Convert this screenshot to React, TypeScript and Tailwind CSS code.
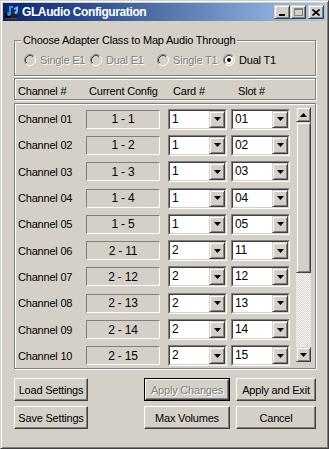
import React from 'react';

const raised =
  'border border-t-[#ffffff] border-l-[#ffffff] border-r-[#404040] border-b-[#404040] shadow-[inset_-1px_-1px_0_#808080]';
const raisedSmall =
  'border border-t-[#d4d0c8] border-l-[#d4d0c8] border-r-[#404040] border-b-[#404040] shadow-[inset_1px_1px_0_#fff,inset_-1px_-1px_0_#808080]';
const etched = 'border border-[#808080] shadow-[inset_1px_1px_0_#fff,1px_1px_0_#fff]';

const rows = [
  ['01', '1 - 1', '1'],
  ['02', '1 - 2', '1'],
  ['03', '1 - 3', '1'],
  ['04', '1 - 4', '1'],
  ['05', '1 - 5', '1'],
  ['06', '2 - 11', '2', '11'],
  ['07', '2 - 12', '2', '12'],
  ['08', '2 - 13', '2', '13'],
  ['09', '2 - 14', '2', '14'],
  ['10', '2 - 15', '2', '15'],
];

function Triangle({ up = false }: { up?: boolean }) {
  return (
    <svg width="7" height="4" viewBox="0 0 7 4">
      <path d={up ? 'M3.5 0L7 4H0Z' : 'M0 0H7L3.5 4Z'} fill="#000" />
    </svg>
  );
}

function Radio({ checked, disabled, label }: { checked?: boolean; disabled?: boolean; label: string }) {
  return (
    <div className="flex items-center gap-[4px]">
      <svg width="12" height="12" viewBox="0 0 12 12">
        <circle cx="6" cy="6" r="5" fill={disabled ? '#d4d0c8' : '#fff'} />
        <path d="M2.11 9.89A5.5 5.5 0 0 1 9.89 2.11" stroke="#808080" fill="none" />
        <path d="M9.89 2.11A5.5 5.5 0 0 1 2.11 9.89" stroke="#fff" fill="none" />
        <path d="M2.82 9.18A4.5 4.5 0 0 1 9.18 2.82" stroke="#404040" fill="none" />
        <path d="M9.18 2.82A4.5 4.5 0 0 1 2.82 9.18" stroke="#d4d0c8" fill="none" />
        {checked && <circle cx="6" cy="6" r="2" fill="#000" />}
      </svg>
      <span className={disabled ? 'text-[#808080] [text-shadow:1px_1px_0_#fff]' : 'text-black'}>{label}</span>
    </div>
  );
}

function Combo({ value }: { value: string }) {
  return (
    <div className="flex h-[21px] w-[59px] border border-t-[#808080] border-l-[#808080] border-r-white border-b-white">
      <div className="flex flex-1 border border-t-[#404040] border-l-[#404040] border-r-[#d4d0c8] border-b-[#d4d0c8] bg-white">
        <span className="flex-1 pl-[2px] text-[12px] leading-[17px]">{value}</span>
        <div className={`flex w-[16px] items-center justify-center bg-[#d4d0c8] ${raisedSmall}`}>
          <Triangle />
        </div>
      </div>
    </div>
  );
}

function Button({ label, disabled, isDefault }: { label: string; disabled?: boolean; isDefault?: boolean }) {
  const inner = (
    <div
      className={`flex h-full items-center justify-center bg-[#d4d0c8] ${raised} ${
        disabled ? 'text-[#808080] [text-shadow:1px_1px_0_#fff]' : 'text-black'
      }`}
    >
      {label}
    </div>
  );
  if (isDefault) return <div className="h-[23px] border border-black">{inner}</div>;
  return <div className="h-[23px]">{inner}</div>;
}

function TitleIcon() {
  return (
    <svg width="16" height="16" viewBox="0 0 16 16">
      <rect x="1" y="9" width="6" height="5" fill="#000" />
      <rect x="8" y="10" width="6" height="4" fill="#202020" />
      <path d="M5 2h4v2H7v6H5z" fill="#3a8fd8" />
      <circle cx="5" cy="10" r="2" fill="#3a8fd8" />
      <path d="M10 4l4-2v6h-2V5l-2 1z" fill="#6fb6ef" />
      <circle cx="12" cy="8.5" r="1.5" fill="#6fb6ef" />
      <rect x="2" y="14" width="11" height="1" fill="#505050" />
    </svg>
  );
}

function CaptionButton({ children, className = '' }: { children: React.ReactNode; className?: string }) {
  return (
    <div className={`flex h-[14px] w-[16px] items-center justify-center bg-[#d4d0c8] ${raisedSmall} ${className}`}>
      {children}
    </div>
  );
}

export default function App() {
  return (
    <div className="h-[449px] w-[329px] overflow-hidden border border-t-[#d4d0c8] border-l-[#d4d0c8] border-r-[#404040] border-b-[#404040] bg-[#d4d0c8] p-[2px] font-['Liberation_Sans',Arial,sans-serif] text-[11px] leading-[14px] tracking-[-0.2px] text-black shadow-[inset_1px_1px_0_#fff,inset_-1px_-1px_0_#808080]">
      {/* title bar */}
      <div className="flex h-[18px] items-center bg-gradient-to-r from-[#0a246a] to-[#a6caf0] pl-[1px] pr-[2px]">
        <TitleIcon />
        <span className="ml-[2px] flex-1 text-[12px] font-bold tracking-[-0.4px] text-white">GLAudio Configuration</span>
        <CaptionButton>
          <div className="mt-[6px] h-[2px] w-[6px] bg-black" />
        </CaptionButton>
        <CaptionButton>
          <div className="h-[8px] w-[9px] border border-t-2 border-[#808080]" />
        </CaptionButton>
        <CaptionButton className="ml-[2px]">
          <svg width="8" height="7" viewBox="0 0 8 7">
            <path d="M0.5 0.5L7.5 6.5M7.5 0.5L0.5 6.5" stroke="#000" strokeWidth="1.6" />
          </svg>
        </CaptionButton>
      </div>

      <div className="pl-[11px] pr-[10px]">
        {/* adapter class group */}
        <fieldset className={`mt-[12px] h-[43px] ${etched}`}>
          <legend className="ml-[6px] bg-[#d4d0c8] px-[2px]">Choose Adapter Class to Map Audio Through</legend>
          <div className="mt-[6px] flex pl-[9px]">
            <div className="w-[66px]">
              <Radio disabled label="Single E1" />
            </div>
            <div className="w-[67px]">
              <Radio disabled label="Dual E1" />
            </div>
            <div className="w-[66px]">
              <Radio disabled label="Single T1" />
            </div>
            <Radio checked label="Dual T1" />
          </div>
        </fieldset>

        {/* column headers */}
        <div className={`mt-[2px] flex h-[22px] pl-[3px] pt-[5px] ${etched}`}>
          <span className="w-[71px]">Channel #</span>
          <span className="w-[84px]">Current Config</span>
          <span className="w-[65px]">Card #</span>
          <span>Slot #</span>
        </div>

        {/* channel list */}
        <div className={`mt-[3px] flex h-[266px] pl-[3px] pr-[4px] ${etched}`}>
          <div className="grid h-[265px] flex-1 grid-rows-10 pt-[2px]">
            {rows.map(([ch, cfg, card, slot]) => (
              <div key={ch} className="flex items-center">
                <span className="w-[68px]">Channel {ch}</span>
                <div className="flex h-[19px] w-[74px] items-center justify-center border border-t-[#808080] border-l-[#808080] border-r-white border-b-white text-[12px]">
                  {cfg}
                </div>
                <div className="ml-[8px]">
                  <Combo value={card} />
                </div>
                <div className="ml-[4px]">
                  <Combo value={slot ?? ch} />
                </div>
              </div>
            ))}
          </div>
          {/* scrollbar */}
          <div className="mt-[3px] flex h-[255px] w-[15px] flex-col">
            <div className={`flex h-[15px] items-center justify-center bg-[#d4d0c8] ${raisedSmall}`}>
              <Triangle up />
            </div>
            <div className={`h-[151px] bg-[#d4d0c8] ${raisedSmall}`} />
            <div className="flex-1 bg-[repeating-conic-gradient(#ffffff_0_25%,#d4d0c8_0_50%)] bg-[length:2px_2px]" />
            <div className={`flex h-[15px] items-center justify-center bg-[#d4d0c8] ${raisedSmall}`}>
              <Triangle />
            </div>
          </div>
        </div>

        {/* buttons */}
        <div className="mt-[9px] grid grid-cols-[74px_44px_86px_80px] gap-x-[6px] gap-y-[5px]">
          <Button label="Load Settings" />
          <div />
          <Button label="Apply Changes" disabled isDefault />
          <Button label="Apply and Exit" />
          <Button label="Save Settings" />
          <div />
          <Button label="Max Volumes" />
          <Button label="Cancel" />
        </div>
      </div>
    </div>
  );
}
